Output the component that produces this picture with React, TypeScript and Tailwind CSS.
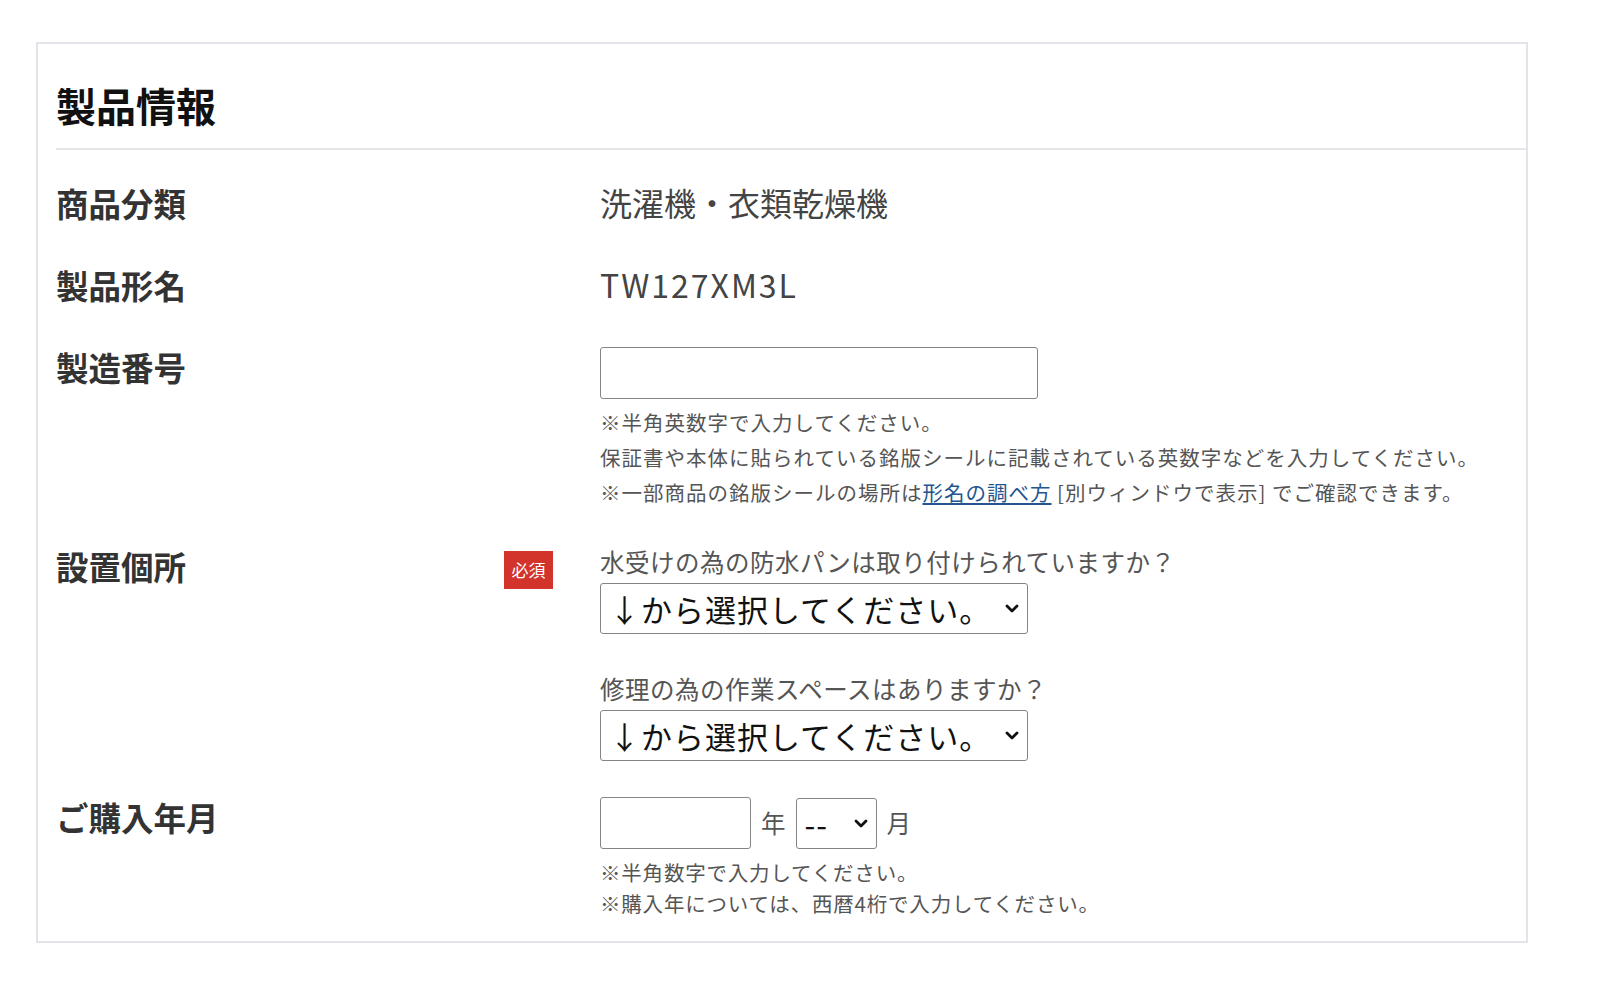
import React from 'react';

const font = { fontFamily: '"Noto Sans CJK JP", "Noto Sans", sans-serif' };

function Chevron({ className }: { className?: string }) {
  return (
    <svg className={className} viewBox="0 0 14 9" width="14" height="9" fill="none">
      <path d="M2 2l5 5 5-5" stroke="#111" strokeWidth="2.8" strokeLinecap="round" strokeLinejoin="round" />
    </svg>
  );
}

function Select({ width, text }: { width: string; text: string }) {
  return (
    <div className={`relative ${width}`}>
      <select
        className="w-full h-[51px] appearance-none rounded-[3px] border border-[#858585] bg-white pl-[8px] text-[31px] leading-[49px] tracking-[1px] text-[#111] outline-none"
        defaultValue=""
      >
        <option value="">{text}</option>
      </select>
      <Chevron className="pointer-events-none absolute right-[9px] top-[21px]" />
    </div>
  );
}

function Row({ label, badge, children }: { label: string; badge?: boolean; children: React.ReactNode }) {
  return (
    <div className="flex">
      <div className="flex w-[544px] shrink-0 items-start justify-between pr-[47px]">
        <span className="text-[32.5px] font-bold leading-[41px] text-[#333]">{label}</span>
        {badge && (
          <span className="mt-[6px] flex h-[38px] w-[49px] items-center justify-center bg-[#d2342c] text-[17px] text-white">
            必須
          </span>
        )}
      </div>
      <div className="flex-1">{children}</div>
    </div>
  );
}

export default function App() {
  return (
    <div className="min-h-[990px] bg-white pl-[36px] pt-[42px]" style={font}>
      <div className="w-[1492px] border-2 border-[#e3e3ec] pb-[22px] pl-[18px] pt-[37px]">
        <h1 className="text-[40px] font-bold leading-[49px] text-[#111]">製品情報</h1>
        <div className="mt-[18px] h-[2px] bg-[#e6e6e8]" />

        <div className="flex flex-col pt-[32px]">
          <Row label="商品分類">
            <p className="text-[32px] leading-[41px] text-[#444]">洗濯機・衣類乾燥機</p>
          </Row>

          <div className="mt-[41px]">
            <Row label="製品形名">
              <p className="text-[32px] leading-[41px] tracking-[2px] text-[#444]">TW127XM3L</p>
            </Row>
          </div>

          <div className="mt-[41px]">
            <Row label="製造番号">
              <input className="mt-[1px] block h-[52px] w-[438px] rounded-[3px] border border-[#858585] bg-white outline-none" />
              <div className="mt-[6px] text-[20.5px] leading-[35px] tracking-[1px] text-[#555]">
                <p>※半角英数字で入力してください。</p>
                <p>保証書や本体に貼られている銘版シールに記載されている英数字などを入力してください。</p>
                <p>
                  ※一部商品の銘版シールの場所は
                  <a href="#" className="text-[#24558f] underline underline-offset-2">形名の調べ方</a>
                  {' '}[別ウィンドウで表示] でご確認できます。
                </p>
              </div>
            </Row>
          </div>

          <div className="mt-[35px]">
            <Row label="設置個所" badge>
              <p className="text-[24.5px] leading-[33px] tracking-[0.5px] text-[#555]">水受けの為の防水パンは取り付けられていますか？</p>
              <div className="mt-[5px]">
                <Select width="w-[428px]" text="↓から選択してください。" />
              </div>
              <p className="mt-[38px] text-[24.5px] leading-[33px] tracking-[0.5px] text-[#555]">修理の為の作業スペースはありますか？</p>
              <div className="mt-[5px]">
                <Select width="w-[428px]" text="↓から選択してください。" />
              </div>
            </Row>
          </div>

          <div className="mt-[35px]">
            <Row label="ご購入年月">
              <div className="mt-[1px] flex items-center gap-[10px]">
                <input className="block h-[52px] w-[151px] rounded-[3px] border border-[#858585] bg-white outline-none" />
                <span className="text-[24.5px] text-[#555]">年</span>
                <Select width="w-[81px]" text="--" />
                <span className="text-[24.5px] text-[#555]">月</span>
              </div>
              <div className="mt-[8px] text-[20.5px] leading-[31px] tracking-[0.8px] text-[#555]">
                <p>※半角数字で入力してください。</p>
                <p>※購入年については、西暦4桁で入力してください。</p>
              </div>
            </Row>
          </div>
        </div>
      </div>
    </div>
  );
}
